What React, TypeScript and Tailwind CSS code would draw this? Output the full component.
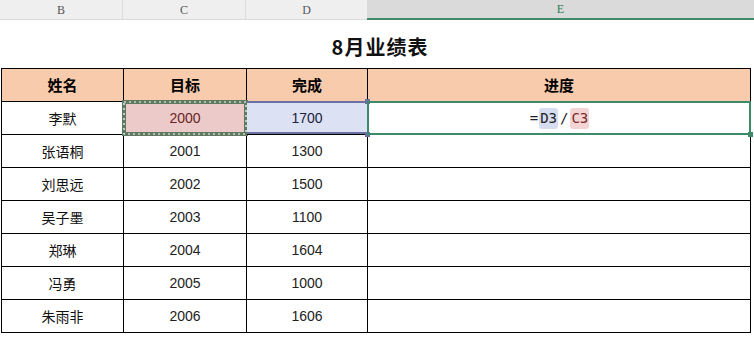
import React from 'react';

const rows = [
  { name: '李默', target: '2000', done: '1700' },
  { name: '张语桐', target: '2001', done: '1300' },
  { name: '刘思远', target: '2002', done: '1500' },
  { name: '吴子墨', target: '2003', done: '1100' },
  { name: '郑琳', target: '2004', done: '1604' },
  { name: '冯勇', target: '2005', done: '1000' },
  { name: '朱雨非', target: '2006', done: '1606' },
];

const cjk = "font-['Noto_Sans_CJK_SC',sans-serif]";
const num = "font-['Liberation_Sans','Noto_Sans_CJK_SC',sans-serif]";
const cell = 'h-[33px] border-r border-b border-black flex items-center justify-center';

function Corner({ className }: { className: string }) {
  return <span className={`absolute w-[5px] h-[5px] ${className}`} />;
}

export default function App() {
  return (
    <div className="w-[754px] h-[337px] bg-white overflow-hidden relative">
      {/* Column headers */}
      <div className="flex h-[20px] text-[12px] text-[#555] font-['Liberation_Serif',serif]">
        <div className="w-[123px] bg-[#efefef] border-r border-[#dadada] border-b flex items-center justify-center">B</div>
        <div className="w-[123px] bg-[#efefef] border-r border-[#dadada] border-b flex items-center justify-center">C</div>
        <div className="w-[121px] bg-[#efefef] border-b border-[#dadada] flex items-center justify-center">D</div>
        <div className="flex-1 bg-[#dadada] border-b-2 border-[#3f8a69] flex items-center justify-center text-[#2f7a58]">E</div>
      </div>

      {/* Title */}
      <div className={`h-[48px] flex items-center justify-center pl-[6px] pt-[6px] text-[20px] tracking-[1px] font-bold text-[#111] ${cjk}`}>
        8月业绩表
      </div>

      {/* Table */}
      <div className="ml-[1px] w-[750px] border-l border-t border-black grid grid-cols-[122px_123px_121px_383px]">
        {['姓名', '目标', '完成', '进度'].map((h) => (
          <div key={h} className={`${cell} bg-[#f8cbad] text-[15px] font-bold text-black ${cjk}`}>
            {h}
          </div>
        ))}

        {rows.map((r, i) => (
          <React.Fragment key={r.name}>
            <div className={`${cell} text-[14px] text-[#111] ${cjk}`}>{r.name}</div>
            {i === 0 ? (
              <>
                <div className={`${cell} relative bg-[#eccaca] text-[14px] text-[#6a2424] ${num}`}>
                  {r.target}
                  <svg className="absolute -left-[2px] -top-[2px] w-[126px] h-[36px]" viewBox="0 0 126 36">
                    <rect x="2" y="2" width="122" height="32" fill="none" stroke="#5f7a61" strokeWidth="4" />
                    <rect x="2" y="2" width="122" height="32" fill="none" stroke="#ffffff" strokeWidth="1.2" strokeDasharray="2 3" />
                  </svg>
                </div>
                <div className={`${cell} relative bg-[#dce1f4] text-[14px] text-[#1b2340] ${num}`}>
                  {r.done}
                  <span className="absolute left-0 right-0 -top-[1px] h-[2px] bg-[#6a70a4]" />
                  <span className="absolute left-0 right-0 bottom-0 h-[2px] bg-[#6a70a4]" />
                  <Corner className="-top-[3px] -right-[3px] bg-[#6a70a4]" />
                  <Corner className="-bottom-[3px] -right-[3px] bg-[#6a70a4]" />
                </div>
                <div className={`${cell} relative text-[14px] text-[#222] font-['DejaVu_Sans_Mono',monospace]`}>
                  <span className="absolute -left-[1px] -top-[1px] right-[-1px] bottom-[-1px] border-2 border-[#3d8a6a]" />
                  <Corner className="-bottom-[3px] -right-[3px] bg-[#3d8a6a]" />
                  <span className="flex items-center ml-[1px]">
                    <span className="pr-[1px]">=</span>
                    <span className="bg-[#d7ddf1] rounded-[3px] px-[1px]">D3</span>
                    <span className="px-[2px]">/</span>
                    <span className="bg-[#f3d3d3] rounded-[3px] px-[1px] text-[#7a2a2a]">C3</span>
                  </span>
                </div>
              </>
            ) : (
              <>
                <div className={`${cell} text-[14px] text-[#222] ${num}`}>{r.target}</div>
                <div className={`${cell} text-[14px] text-[#222] ${num}`}>{r.done}</div>
                <div className={cell} />
              </>
            )}
          </React.Fragment>
        ))}
      </div>
    </div>
  );
}
